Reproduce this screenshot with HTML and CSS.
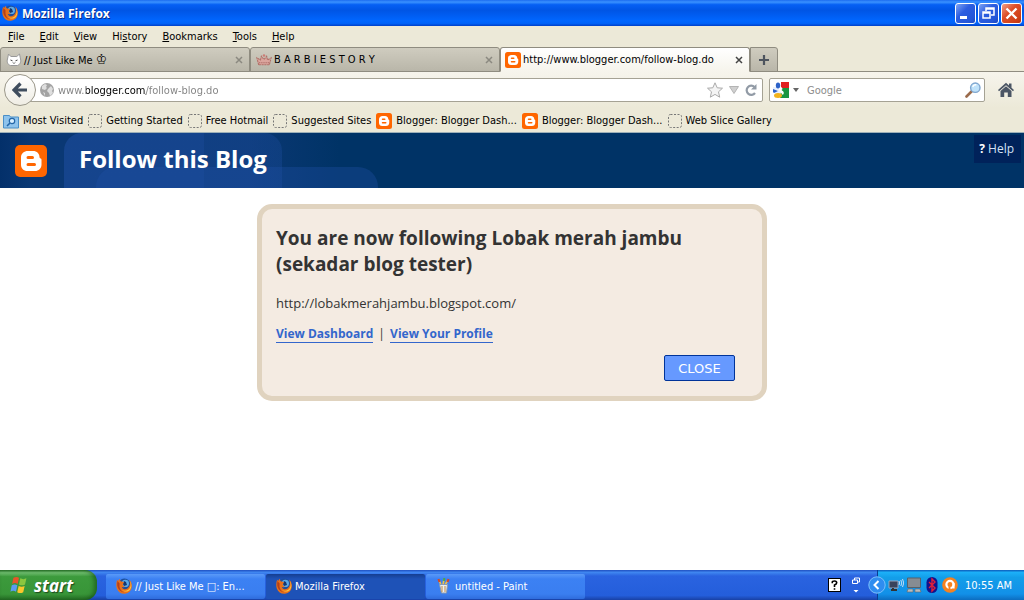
FILE: index.html
```html
<!DOCTYPE html>
<html lang="en">

<head>
    <meta charset="UTF-8">
    <meta name="viewport" content="width=device-width, initial-scale=1.0">
    <title>Mozilla Firefox</title>
    <link rel="stylesheet" href="styles.css">
</head>

<body>
    <!-- shared icons -->
    <svg class="sprite" aria-hidden="true">
        <symbol id="firefox" viewBox="0 0 16 16">
            <circle cx="8.4" cy="7" r="6.4" fill="#1d4f9e" />
            <circle cx="9.4" cy="5.4" r="3.6" fill="#5aa9e6" />
            <path d="M8 3l2 1 1 3-3 1-1-2z" fill="#18376e" />
            <path d="M1.2 1.4C.2 4-.1 7.5.8 10.400C2 14 5 15.900 8.500 15.800c4.500-.2 7.400-3.600 7.300-8C15.700 5 14.800 3 13 1.600c1 2 1.300 4 .6 5.800-1 3-3.600 4.300-6 3.500-1-.4-1.600-1-1.700-1.800 1 .3 2.200.2 3-.7-1.500-.2-2-1-2.100-2 .1-1 .8-1.400 1.300-1.700C7 3.500 6 3.300 5 3.600 4 2.600 3.800 1.800 4 .7 3 1.300 2.500 2 2.200 2.900 1.600 2.500 1.300 2 1.200 1.400z" fill="#e8701a" />
            <path d="M13.500 2.600c2 3 1.500 7-1 9-2 1.500-5 1.700-7 .2 3 2.700 7 2.300 8.900-.6 1.500-2.400 1.300-6-.9-8.600z" fill="#ffc43a" />
            <path d="M1.500 3C.8 6 1.200 9 2.600 11 4 13 6 14 8 14.400 4.500 13 3 9.500 3.600 5.500z" fill="#b5401a" />
        </symbol>
        <symbol id="blogger" viewBox="0 0 32 32">
            <rect width="32" height="32" rx="5" fill="#ff6600" />
            <path d="M13 6h5c4 0 6.500 2.700 6.500 6 0 .9.500 1.400 1.200 1.500.7.100.8.600.8 1.500v4.500c0 4-2.800 6.500-6.500 6.500h-7.500C8.500 26 6 23.500 6 19.500v-7C6 8.500 9 6 13 6z" fill="#fff" />
            <path d="M13 12.500h4.500M13 19.500h6.500" stroke="#ff6600" stroke-width="3" stroke-linecap="round" />
        </symbol>
        <symbol id="page" viewBox="0 0 14 14">
            <rect x=".5" y=".5" width="13" height="13" rx="2" fill="none" stroke="#777" stroke-dasharray="2 1.500" />
        </symbol>
        <symbol id="crown" viewBox="0 0 15 12">
            <path d="M2.500 10.500L.8 4l3.400 2L5 2.500l2.500 3L10 2.500l.8 3.500 3.400-2-1.700 6.500z" fill="#dba59d" stroke="#b07068" stroke-dasharray="2 .6" />
            <path d="M3 8.500h9" stroke="#a05c58" stroke-dasharray="1 1" />
            <circle cx="7.500" cy="1.700" r="1.200" fill="#cc7d76" />
        </symbol>
    </svg>

    <header class="titlebar">
        <svg class="icon16"><use href="#firefox" /></svg>
        <span class="titlebar-text">Mozilla Firefox</span>
        <button class="win-btn" aria-label="Minimize">
            <svg viewBox="0 0 19 19"><path d="M4 13.500h7" stroke="#fff" stroke-width="3" /></svg>
        </button>
        <button class="win-btn" aria-label="Restore">
            <svg viewBox="0 0 19 19"><path d="M7 7V4h8v7h-3M7 5h8" fill="none" stroke="#fff" stroke-width="1.500" /><path d="M4 8h7v6H4zM4 9h7" fill="none" stroke="#fff" stroke-width="1.500" /></svg>
        </button>
        <button class="win-btn win-close" aria-label="Close window">
            <svg viewBox="0 0 19 19"><path d="M4.500 4.500l10 10M14.500 4.500l-10 10" stroke="#fff" stroke-width="2.400" /></svg>
        </button>
    </header>

    <nav class="menubar">
        <button><u>F</u>ile</button>
        <button><u>E</u>dit</button>
        <button><u>V</u>iew</button>
        <button>Hi<u>s</u>tory</button>
        <button><u>B</u>ookmarks</button>
        <button><u>T</u>ools</button>
        <button><u>H</u>elp</button>
    </nav>

    <div class="tabs">
        <div class="tab">
            <svg class="icon16" viewBox="0 0 16 16"><path d="M2.500 2l2.300 2.500h6L13.500 2l1 5c1 3-1 6-3 6.500h-7C2 13 .5 10 1.500 7z" fill="#fff" stroke="#999" /><path d="M4.500 8l2 .8M11.500 8l-2 .8M7 10.500l1 1 1-1" fill="none" stroke="#444" /></svg>
            <span class="tab-title">// Just Like Me <span class="glyph">♔</span></span>
            <button class="tab-close" aria-label="Close tab"><svg viewBox="0 0 8 8"><path d="M1 1l6 6M7 1L1 7" /></svg></button>
        </div>
        <div class="tab">
            <svg class="icon16"><use href="#crown" /></svg>
            <span class="tab-title">B A R B I E S T O R Y</span>
            <button class="tab-close" aria-label="Close tab"><svg viewBox="0 0 8 8"><path d="M1 1l6 6M7 1L1 7" /></svg></button>
        </div>
        <div class="tab active">
            <svg class="icon16"><use href="#blogger" /></svg>
            <span class="tab-title">http://www.blogger.com/follow-blog.do</span>
            <button class="tab-close" aria-label="Close tab"><svg viewBox="0 0 8 8"><path d="M1 1l6 6M7 1L1 7" /></svg></button>
        </div>
        <button class="new-tab" aria-label="New tab">
            <svg viewBox="0 0 12 12"><path d="M6 1v10M1 6h10" stroke="#4d545e" stroke-width="2.200" /></svg>
        </button>
    </div>

    <div class="navbar">
        <button class="back" aria-label="Back">
            <svg viewBox="0 0 16 16"><path d="M8.500 1.500L2 8l6.500 6.500M3 8h12" fill="none" stroke="#3f4d5e" stroke-width="3.200" /></svg>
        </button>
        <div class="field url-field">
            <svg class="globe" viewBox="0 0 14 14"><circle cx="7" cy="7" r="7" fill="#a3a3a3" /><path d="M2 3l3-2 2 1-1 2 1 1-2 2-3-1zM8 6l3-3 2 3-1 2 1 2-3 3-1-3-2-2zM3 9l2 1v3z" fill="#dedede" /></svg>
            <input class="url" type="text" aria-label="Address" value="www.blogger.com/follow-blog.do">
            <button class="field-btn" aria-label="Bookmark this page"><svg class="icon16" viewBox="0 0 16 16"><path d="M8 .8l2.200 5 5.300.4-4 3.600 1.200 5.400L8 12.400l-4.700 2.800 1.200-5.400-4-3.600 5.300-.4z" fill="#f4f4f4" stroke="#aaa" /></svg></button>
            <button class="field-btn" aria-label="Show history"><svg class="arrow" viewBox="0 0 10 8"><path d="M.5.5h9L5 7.500z" fill="#d0d0d0" stroke="#b4b4b4" /></svg></button>
            <button class="field-btn" aria-label="Reload"><svg class="reload" viewBox="0 0 12 12"><path d="M9.500 3A4.600 4.600 0 1 0 10 9" fill="none" stroke="#929ba6" stroke-width="2.200" /><path d="M11.500 0v5.500H6z" fill="#929ba6" /></svg></button>
        </div>
        <div class="field search-field">
            <svg class="icon16" viewBox="0 0 16 16"><path d="M8 0h8v8H8z" fill="#e02020" /><path d="M8 8V6h8v10H7z" fill="#1a9641" /><path d="M0 5h5l3 6-4 2-4-3z" fill="#e8f0ff" /><ellipse cx="5" cy="3.500" rx="2.200" ry="3" fill="#2c62c8" /><path d="M0 7l5 2-4 2-1-1z" fill="#2c62c8" /><path d="M9 6c-3 2-1 3 0 4s0 2 0 2" fill="none" stroke="#fff" stroke-width="2.500" /><ellipse cx="5" cy="13.500" rx="4" ry="2.500" fill="#f2b21b" /></svg>
            <svg class="mini-arrow" viewBox="0 0 6 4"><path d="M0 0h6L3 4z" fill="#666" /></svg>
            <input type="text" aria-label="Search" placeholder="Google">
            <button class="field-btn" aria-label="Search"><svg class="icon16" viewBox="0 0 16 16"><path d="M1.500 14.500l6-6" stroke="#9b6b4b" stroke-width="2.600" stroke-linecap="round" /><circle cx="10.300" cy="5.700" r="4.700" fill="#bfe2fa" stroke="#7fa6cf" stroke-width="1.400" /><path d="M7.800 5c.5-2 2-2.500 3.500-2" fill="none" stroke="#fff" stroke-width="1.400" /></svg></button>
        </div>
        <button class="home" aria-label="Home">
            <svg viewBox="0 0 16 16"><path d="M0 8L8 .8l3 2.700V1.500h2.500v4.200L16 8l-1 1.200L8 3.200 1 9.200z" fill="#4b5564" /><path d="M2.500 9L8 4.300 13.500 9v6H9.800v-4.500H6.200V15H2.500z" fill="#4b5564" /></svg>
        </button>
    </div>

    <nav class="bookmarks">
        <a href="#"><svg class="icon16" viewBox="0 0 16 16"><path d="M.5 2.500h6l1 1.500h8v11H.5z" fill="#8ec3ec" stroke="#4a8fc7" /><path d="M4 13l3-3" stroke="#2467a8" stroke-width="1.600" /><circle cx="9" cy="8" r="2.700" fill="#d9f0ff" stroke="#2467a8" stroke-width="1.200" /></svg>Most Visited</a>
        <a href="#"><svg class="page-icon"><use href="#page" /></svg>Getting Started</a>
        <a href="#"><svg class="page-icon"><use href="#page" /></svg>Free Hotmail</a>
        <a href="#"><svg class="page-icon"><use href="#page" /></svg>Suggested Sites</a>
        <a href="#"><svg class="icon16"><use href="#blogger" /></svg>Blogger: Blogger Dash...</a>
        <a href="#"><svg class="icon16"><use href="#blogger" /></svg>Blogger: Blogger Dash...</a>
        <a href="#"><svg class="page-icon"><use href="#page" /></svg>Web Slice Gallery</a>
    </nav>

    <main class="page">
        <div class="page-header">
            <svg class="logo"><use href="#blogger" /></svg>
            <h1>Follow this Blog</h1>
            <a class="help" href="#"><b>?</b> Help</a>
        </div>
        <section class="card">
            <h2>You are now following Lobak merah jambu (sekadar blog tester)</h2>
            <p class="blog-url">http://lobakmerahjambu.blogspot.com/</p>
            <p class="links"><a href="#">View Dashboard</a> | <a href="#">View Your Profile</a></p>
            <div class="actions">
                <button class="close-btn">CLOSE</button>
            </div>
        </section>
    </main>

    <footer class="taskbar">
        <button class="start">
            <svg viewBox="0 0 18 18"><path d="M4 2.500c2-1 3.500-1 5 0L7.800 8c-1.600-1-3.300-1-5 0z" fill="#e8542a" /><path d="M10.200 3c1.800 1 3.500 1 5.500 0l-1.300 5.500c-1.800 1-3.600 1-5.400 0z" fill="#8cc63f" /><path d="M2.500 9.300c1.800-1 3.400-1 5 0L6.300 15c-1.600-1-3.300-1-5 0z" fill="#5b9bf0" /><path d="M8.700 9.800c1.800 1 3.500 1 5.400 0L12.800 15.500c-1.800 1-3.600 1-5.400 0z" fill="#fbc62c" /></svg>
            start
        </button>
        <div class="tasks">
            <button class="task"><svg class="icon16"><use href="#firefox" /></svg>// Just Like Me □: En...</button>
            <button class="task pressed"><svg class="icon16"><use href="#firefox" /></svg>Mozilla Firefox</button>
            <button class="task"><svg class="icon16" viewBox="0 0 16 16"><path d="M5 7l-2-5M7 7l1-6M9 7l3-5" stroke="#f0c14b" stroke-width="1.600" /><path d="M2.500 1l1 3M12.500 1l-1 3" stroke="#d24a2a" stroke-width="2.200" /><path d="M8.300 0l-.4 3" stroke="#4aa84a" stroke-width="2" /><path d="M3.500 6.500h8l-1 8.500h-5z" fill="#e9edf2" stroke="#8c9aad" /><path d="M6 8v6M9 8v6" stroke="#c08a40" /></svg>untitled - Paint</button>
        </div>
        <div class="lang">
            <svg class="lang-help" viewBox="0 0 13 14"><rect x=".5" y=".5" width="12" height="13" fill="#fff" stroke="#000" /><path d="M4.300 5.300V4q0-1 2.200-1t2.200 1.700Q8.700 6 6.500 7v2M6.500 10.200v1.600" fill="none" stroke="#000" stroke-width="1.600" /></svg>
            <svg class="lang-opts" viewBox="0 0 8 17"><path d="M2.500 3V1h5v4h-2M.5 3h5v3.500h-5z" fill="none" stroke="#fff" /><path d="M1.500 13h5L4 15.500z" fill="#fff" /></svg>
        </div>
        <div class="tray">
            <button class="tray-toggle" aria-label="Hide icons"><svg viewBox="0 0 18 18"><circle cx="9" cy="9" r="8.200" fill="#2f8df0" stroke="#7cc0fa" /><path d="M10.500 5L6.500 9l4 4" fill="none" stroke="#fff" stroke-width="2" /></svg></button>
            <svg class="icon16" viewBox="0 0 16 16"><path d="M1 4h9v7H1z" fill="#39435c" stroke="#9aa6bd" /><path d="M3 13h6M5 11v2" stroke="#333" stroke-width="2" /><path d="M11 4q1.500 2 0 4M12.800 3q2 3 0 6M14.500 2q2.500 4 0 8" fill="none" stroke="#c6dcf5" /></svg>
            <svg class="icon16" viewBox="0 0 16 16"><path d="M1.500 1h13v9.500h-13z" fill="#868c92" stroke="#5b6168" /><path d="M2 12h5v3H1zM9 12h5l1 3H9z" fill="#b7bcc1" stroke="#666" stroke-width=".6" /></svg>
            <svg class="icon16" viewBox="0 0 16 16"><rect x="2.500" y="0" width="11" height="16" rx="5.500" fill="#12128c" /><path d="M5 5l6 6-3 3V2l3 3-6 6" fill="none" stroke="#e0203a" stroke-width="1.400" /></svg>
            <svg class="icon16" viewBox="0 0 16 16"><circle cx="8" cy="8" r="7.800" fill="#f58220" /><circle cx="8" cy="7.500" r="3.600" fill="none" stroke="#fff" stroke-width="2.200" /><path d="M11.500 6v5.500" stroke="#fff" stroke-width="2.200" /><path d="M7.500 9.500v5" stroke="#f58220" stroke-width="2" /></svg>
            <time class="clock">10:55 AM</time>
        </div>
    </footer>
</body>

</html>
```

FILE: styles.css
```css
* {
    box-sizing: border-box;
}

body {
    display: flex;
    flex-direction: column;
    height: 100vh;
    margin: 0;
    background-color: #ece9d8;
    font-family: "DejaVu Sans Condensed", "DejaVu Sans", sans-serif;
    font-size: 11px;
    color: #000000;
}

button {
    border: none;
    background: none;
    padding: 0;
    margin: 0;
    font: inherit;
    color: inherit;
}

a {
    color: inherit;
    text-decoration: none;
}

svg {
    display: block;
    flex: none;
}

.sprite {
    display: none;
}

.icon16 {
    width: 16px;
    height: 16px;
}

/* title bar */
.titlebar {
    display: flex;
    align-items: center;
    gap: 2px;
    flex: none;
    height: 26px;
    padding: 0 2px;
    background: linear-gradient(#1c6cf0 0%, #3a92ff 8%, #0660f4 18%, #0055e5 40%, #0066ff 80%, #0062f8 90%, #003fc8 100%);
}

.titlebar-text {
    flex: 1;
    margin-left: 2px;
    font-family: "Open Sans", sans-serif;
    font-size: 12px;
    font-weight: bold;
    color: #ffffff;
    text-shadow: 1px 1px #0a2d8a;
}

.win-btn {
    width: 21px;
    height: 21px;
    border: 1px solid #ffffff;
    border-radius: 3px;
    background: linear-gradient(135deg, #7fa4f4, #2c5de0 40%, #2456d8 80%, #1a46c0);
}

.win-close {
    background: linear-gradient(135deg, #f0a088, #dd4f2a 40%, #cf4018 80%, #b83410);
}

/* menu */
.menubar {
    display: flex;
    align-items: center;
    gap: 15px;
    flex: none;
    height: 21px;
    padding: 0 8px;
}

/* tabs */
.tabs {
    display: flex;
    flex: none;
    height: 25px;
    border-bottom: 1px solid #8f8c80;
}

.tab {
    display: flex;
    align-items: center;
    flex: 0 1 250px;
    min-width: 0;
    height: 25px;
    padding: 0 6px 0 5px;
    border: 1px solid #8f8c80;
    border-radius: 3px 3px 0 0;
    background: linear-gradient(#cfccbf, #b9b6a9);
}

.tab.active {
    padding-left: 4px;
    border-bottom-color: #f6f4ec;
    background: linear-gradient(#ffffff, #f6f4ec);
}

.tab-title {
    flex: 1;
    overflow: hidden;
    white-space: nowrap;
    padding: 1px 0 0 2px;
    line-height: 16px;
}

.glyph {
    font-size: 14px;
    font-weight: bold;
    line-height: 14px;
}

.tab-close svg {
    width: 8px;
    height: 8px;
    stroke: #8b8980;
    stroke-width: 1.5;
}

.active .tab-close svg {
    stroke: #444444;
}

.new-tab {
    display: flex;
    align-items: center;
    justify-content: center;
    width: 28px;
    height: 25px;
    border: 1px solid #8f8c80;
    border-radius: 0 3px 0 0;
    background: linear-gradient(#cfccbf, #b9b6a9);
}

.new-tab svg {
    width: 12px;
    height: 12px;
}

/* address and search */
.navbar {
    display: flex;
    align-items: center;
    flex: none;
    height: 36px;
    padding: 0 10px 0 4px;
    background: linear-gradient(#f6f4ec, #ece9d8);
}

.back {
    display: flex;
    align-items: center;
    justify-content: center;
    z-index: 1;
    width: 32px;
    height: 32px;
    border: 1px solid #9a978a;
    border-radius: 50%;
    background: linear-gradient(#ffffff, #efede4);
}

.back svg,
.home svg {
    width: 16px;
    height: 16px;
}

.field {
    display: flex;
    align-items: center;
    height: 24px;
    border: 1px solid #a5a294;
    border-radius: 2px;
    background-color: #ffffff;
}

.field input {
    flex: 1;
    min-width: 0;
    border: none;
    outline: none;
    padding: 1px 0 0;
    background-color: transparent;
    font: inherit;
}

.url-field {
    flex: 1;
    gap: 6px;
    margin-left: -8px;
    padding: 0 5px 0 11px;
}

.globe {
    width: 14px;
    height: 14px;
}

/* the domain is darker than the rest of the address */
.field .url {
    margin-left: -2px;
    color: transparent;
    background: linear-gradient(to right, #808080 28px, #000000 28px, #000000 88px, #808080 88px);
    -webkit-background-clip: text;
    background-clip: text;
}

.arrow {
    width: 10px;
    height: 8px;
}

.reload {
    width: 12px;
    height: 12px;
}

.search-field {
    flex: 0 0 216px;
    gap: 4px;
    margin-left: 6px;
    padding: 0 3px;
}

.search-field input {
    padding-left: 4px;
}

.search-field input::placeholder {
    color: #8c8c8c;
}

.mini-arrow {
    width: 6px;
    height: 4px;
}

.home {
    margin-left: 13px;
}

/* bookmarks */
.bookmarks {
    display: flex;
    align-items: center;
    gap: 5px;
    flex: none;
    height: 25px;
    padding: 1px 3px 0;
    border-bottom: 1px solid #9db0b8;
    white-space: nowrap;
}

.bookmarks a {
    display: flex;
    align-items: center;
    gap: 4px;
}

.page-icon {
    width: 14px;
    height: 14px;
}

/* page */
.page {
    flex: 1;
    min-height: 0;
    background-color: #ffffff;
    font-family: "Open Sans", sans-serif;
    font-size: 12px;
    color: #333333;
}

.page-header {
    display: flex;
    align-items: center;
    height: 55px;
    padding: 0 3px 0 15px;
    background: linear-gradient(to right, #03306a, #0a3874 30px, #0a3874 250px, #003366 340px);
    position: relative;
    overflow: hidden;
}

/* overlapping rounded shapes behind the title */
.page-header::before,
.page-header::after {
    content: "";
    position: absolute;
    bottom: 0;
    background-color: rgba(32, 80, 165, 0.35);
}

.page-header::before {
    left: 64px;
    width: 218px;
    height: 55px;
    border-radius: 18px 18px 0 0;
    background: linear-gradient(to right, rgba(32, 80, 165, 0.5) 140px, rgba(32, 80, 165, 0.3) 140px);
}

.page-header::after {
    left: 96px;
    width: 282px;
    height: 21px;
    border-radius: 20px 20px 0 0;
}

.logo {
    width: 32px;
    height: 32px;
}

.page-header h1 {
    z-index: 1;
    flex: 1;
    margin: 0 0 0 32px;
    padding-bottom: 4px;
    font-size: 24px;
    line-height: 32px;
    font-weight: bold;
    color: #ffffff;
}

.help {
    align-self: flex-start;
    margin-top: 2px;
    padding: 0 7px 0 5px;
    background-color: #00225a;
    line-height: 28px;
    color: #d5e2f5;
}

.help b {
    color: #ffffff;
}

.card {
    width: 510px;
    max-width: 100%;
    margin: 16px auto 0;
    padding: 16px 27px 15px 14px;
    border: 5px solid #e0d3bf;
    border-radius: 15px;
    background-color: #f4ebe2;
}

.card h2 {
    margin: 0;
    font-size: 19px;
    line-height: 26px;
    color: #333333;
}

.card p {
    margin: 0;
    line-height: 18px;
}

.card .blog-url {
    margin-top: 17px;
    font-size: 13px;
}

.card .links {
    margin-top: 13px;
}

.links a {
    margin-right: 2px;
    border-bottom: 1px solid #3366cc;
    font-weight: bold;
    line-height: 14px;
    color: #3366cc;
}

.links a + a {
    margin: 0 0 0 2px;
}

.actions {
    display: flex;
    justify-content: flex-end;
    margin-top: 12px;
}

.close-btn {
    width: 71px;
    height: 26px;
    border: 1px solid #003399;
    border-radius: 2px;
    background-color: #6699ff;
    font-family: "DejaVu Sans", sans-serif;
    font-size: 13px;
    color: #ffffff;
}

/* taskbar */
.taskbar {
    display: flex;
    align-items: stretch;
    flex: none;
    height: 30px;
    background: linear-gradient(#1f4fc0 0%, #3f86f0 8%, #2a63e0 20%, #245edb 85%, #1941a5 100%);
    color: #ffffff;
}

.start {
    display: flex;
    align-items: center;
    gap: 5px;
    width: 97px;
    padding-left: 9px;
    border-radius: 0 12px 12px 0;
    background: linear-gradient(#2d7a2d 0%, #6fbf6f 9%, #3c9a3c 22%, #389538 80%, #267026 100%);
    box-shadow: inset -3px 0 4px rgba(10, 60, 10, 0.5);
    font-family: "Open Sans", sans-serif;
    font-size: 17px;
    font-style: italic;
    font-weight: bold;
    text-shadow: 1px 1px 1px #1d4a1d;
}

.start svg {
    width: 20px;
    height: 20px;
}

.tasks {
    display: flex;
    align-items: center;
    gap: 1px;
    flex: 1;
    padding: 3px 0 1px 9px;
}

.task {
    display: flex;
    align-items: center;
    gap: 3px;
    flex: 0 1 159px;
    min-width: 0;
    height: 25px;
    padding-left: 10px;
    border-radius: 2px;
    background: linear-gradient(#5a9af8, #3c81f3 20%, #3a7ef0 80%, #2f6cdc);
    white-space: nowrap;
}

.task.pressed {
    background: linear-gradient(#153e90, #1e52b7 20%, #1e52b7);
}

.lang {
    display: flex;
    align-items: center;
    gap: 11px;
    padding-right: 17px;
}

.lang-help {
    width: 13px;
    height: 14px;
}

.lang-opts {
    width: 8px;
    height: 17px;
}

.tray {
    display: flex;
    align-items: center;
    gap: 2px;
    padding-right: 12px;
    background: linear-gradient(#0c59b9 0%, #1cb0f8 8%, #139ee9 25%, #1290e8 80%, #0c6dc0 100%);
    border-left: 1px solid #0a3d91;
}

.tray-toggle {
    margin-left: -10px;
}

.tray-toggle svg {
    width: 18px;
    height: 18px;
}

.clock {
    margin-left: 5px;
}
```
